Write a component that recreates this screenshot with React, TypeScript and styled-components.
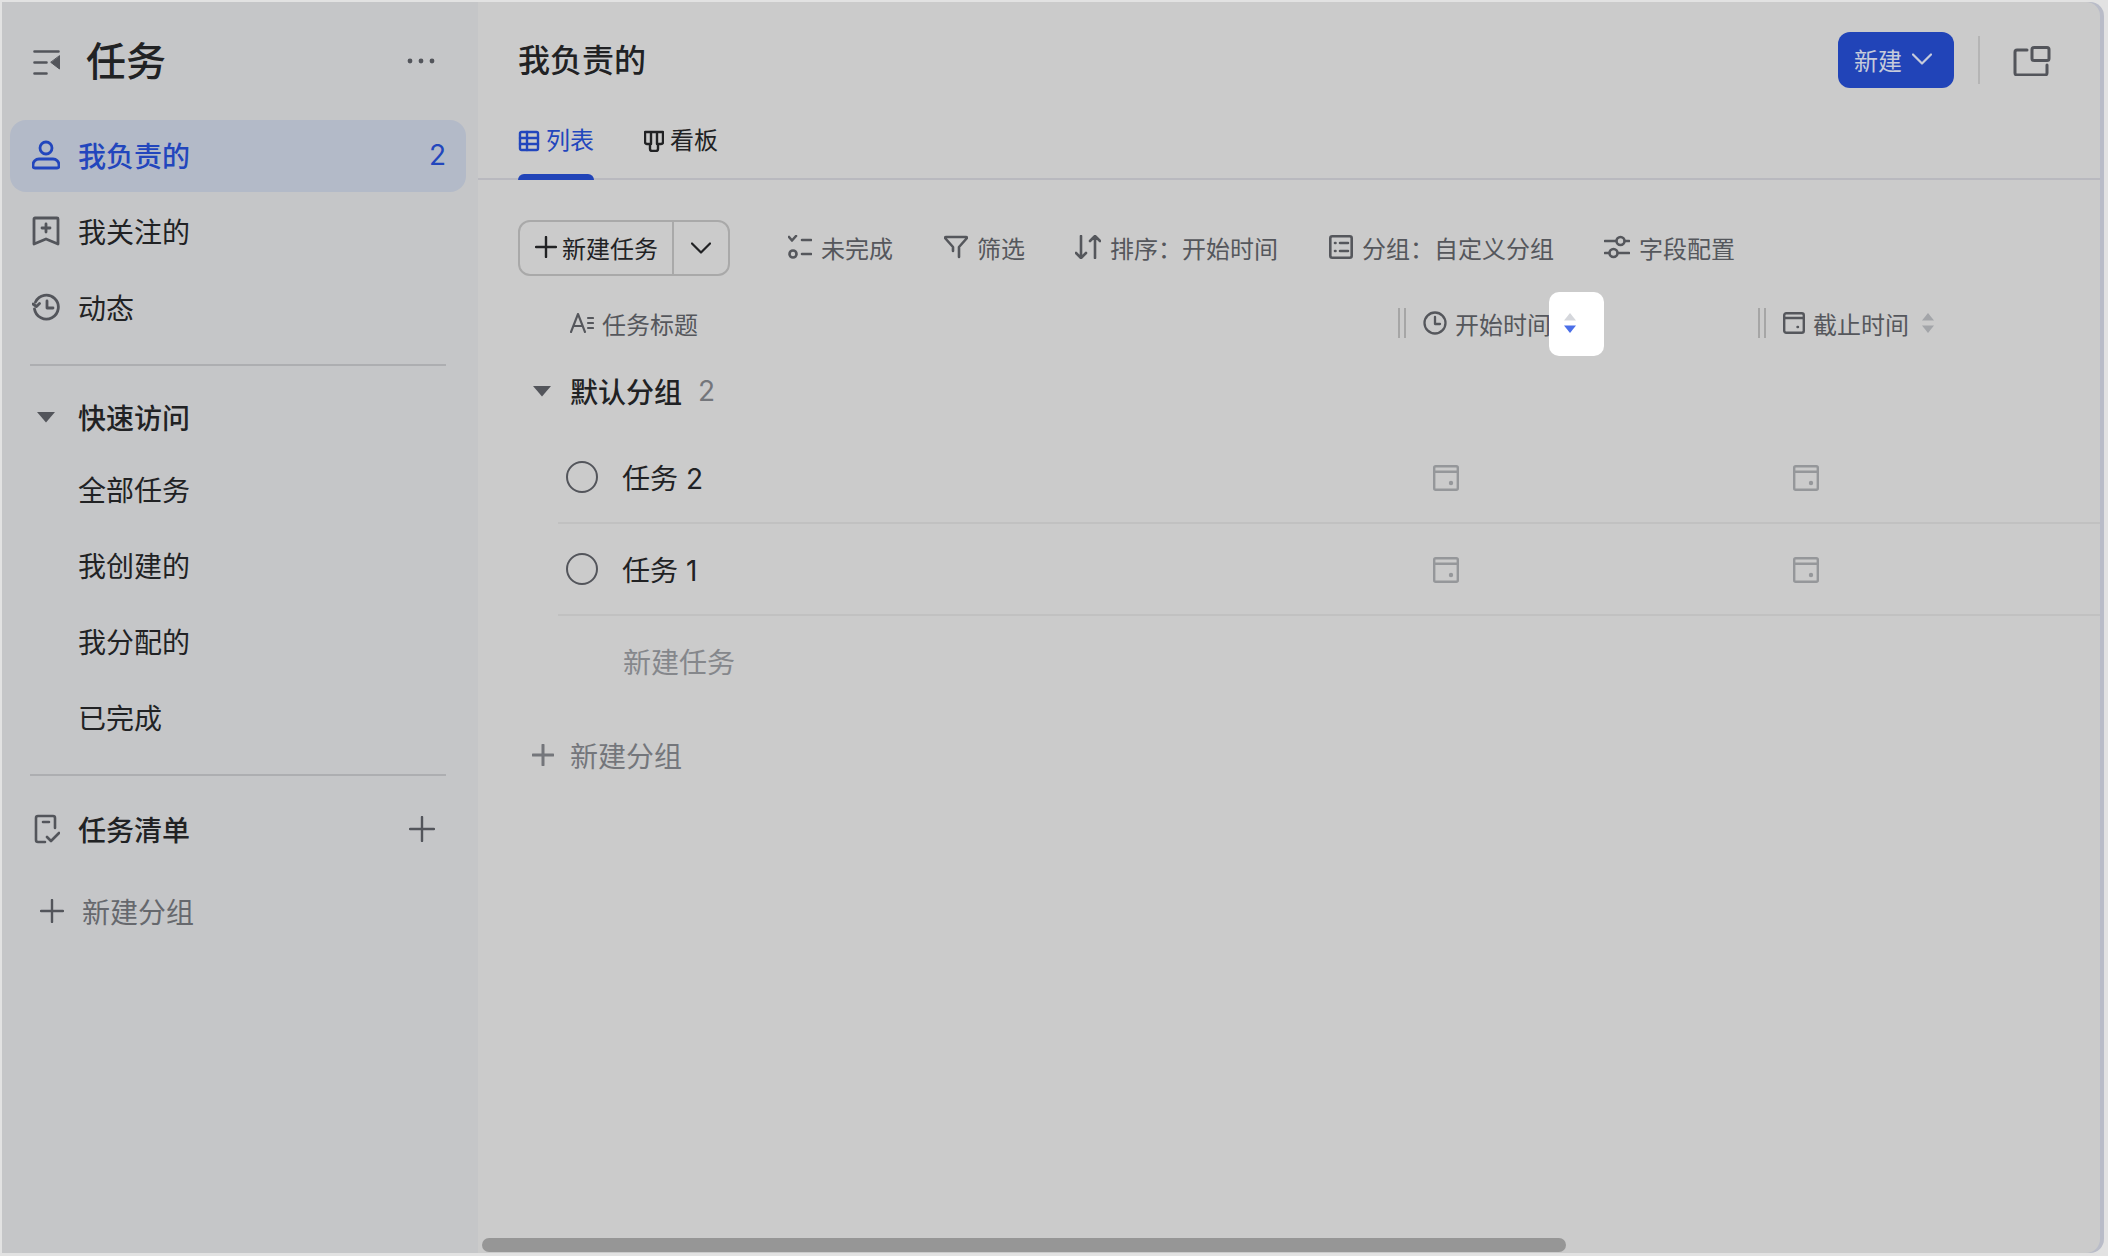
import React from "react";
import styled, { createGlobalStyle } from "styled-components";

const Global = createGlobalStyle`
  html, body { margin: 0; padding: 0; background: #e2e2e2; }
  body { font-family: Inter, "Noto Sans CJK SC", "Noto Sans", sans-serif; color: #212224; }
  * { box-sizing: border-box; }
`;

const Frame = styled.div`
  width: 2108px; height: 1256px; padding: 2px 8px 3px 2px; display: flex; overflow: hidden; background: #e2e2e2;
`;
const Sidebar = styled.aside`
  width: 476px; flex: none; background: #c5c6c8; padding: 0 12px 0 8px; display: flex; flex-direction: column;
`;
const SideHead = styled.div`
  height: 118px; flex: none; display: flex; align-items: center; padding: 2px 31px 0 23px;
`;
const SideTitle = styled.h1`
  margin: 0 0 0 26px; flex: 1; font-size: 40px; line-height: 56px; font-weight: 500; color: #212224;
`;
const MoreIcon = styled.svg`
  margin-top: -2px;
`;
const NavItem = styled.div<{ $active?: boolean }>`
  height: 72px; margin-bottom: 4px; padding: 0 20px 2px 22px; border-radius: 16px; display: flex; align-items: center; gap: 18px;
  font-size: 28px; color: ${(p) => (p.$active ? "#2246bd" : "#212224")};
  background: ${(p) => (p.$active ? "#b3bac8" : "transparent")};
  font-weight: ${(p) => (p.$active ? 500 : 400)};
  svg { flex: none; color: ${(p) => (p.$active ? "#2246bd" : "#53555b")}; }
`;
const NavCount = styled.span`
  margin-left: auto; font-size: 28px; font-weight: 400;
`;
const SideRule = styled.div<{ $gap: number }>`
  height: 2px; flex: none; margin: ${(p) => p.$gap}px 20px 0; background: #adaeb1;
`;
const SectionRow = styled.div<{ $gap: number }>`
  height: 72px; margin-top: ${(p) => p.$gap}px; display: flex; align-items: center; gap: 18px; padding: 0 31px 2px 22px; font-size: 28px; font-weight: 500;
  color: #212224; flex: none;
  svg { flex: none; color: #53555b; }
`;
const CaretBox = styled.span`
  width: 28px; display: flex; justify-content: center;
`;
const SectionText = styled.span`
  flex: 1;
`;
const SubItem = styled.div`
  height: 72px; margin-bottom: 4px; padding: 0 0 2px 68px; display: flex; align-items: center; font-size: 28px; color: #212224; flex: none;
`;
const SideAdd = styled.div`
  height: 72px; margin-top: 9px; display: flex; align-items: center; gap: 18px; padding-left: 30px; font-size: 28px; color: #66686d; flex: none;
  svg { color: #53555b; }
`;

const Main = styled.main`
  flex: 1; min-width: 0; position: relative; background: #cbcbcb; border-radius: 0 14px 14px 0; display: flex; flex-direction: column;
  box-shadow: 4px 0 0 #b9bcc8;
`;
const TopBar = styled.div`
  height: 116px; flex: none; display: flex; align-items: center; padding: 2px 49px 0 40px;
`;
const PageTitle = styled.h2`
  margin: 0; flex: 1; font-size: 32px; line-height: 44px; font-weight: 500; color: #212224;
`;
const NewButton = styled.button`
  width: 116px; height: 56px; margin-top: -2px; border: 0; border-radius: 12px; background: #2144b8; color: #c6cbdb; display: flex; align-items: center;
  gap: 10px; font: inherit; font-size: 24px; padding: 0 0 2px 16px;
`;
const TopRule = styled.div`
  width: 2px; height: 48px; margin: -2px 33px 0 24px; background: #b5b5b5;
`;
const Tabs = styled.div`
  height: 62px; flex: none; display: flex; align-items: flex-start; gap: 50px; padding: 0 40px; border-bottom: 2px solid #b9b9bf;
`;
const Tab = styled.div<{ $active?: boolean }>`
  position: relative; height: 60px; padding-top: 5px; display: flex; align-items: flex-start; gap: 6px; font-size: 24px; line-height: 36px;
  color: ${(p) => (p.$active ? "#2246bd" : "#212224")};
  svg { margin-top: 7px; flex: none; }
  ${(p) => p.$active && `&::after { content: ""; position: absolute; left: 0; right: 0; bottom: -2px; height: 6px; border-radius: 6px 6px 0 0; background: #2144b8; }`}
`;
const Toolbar = styled.div`
  flex: none; height: 56px; margin-top: 40px; padding-left: 40px; display: flex; align-items: center; gap: 51px;
`;
const SplitButton = styled.div`
  width: 212px; height: 56px; margin-right: 7px; flex: none; border: 2px solid #a9a9a9; border-radius: 12px; display: flex; align-items: stretch;
  font-size: 24px; color: #212224;
`;
const SplitMain = styled.div`
  width: 154px; padding: 0 0 2px 15px; border-right: 2px solid #a9a9a9; display: flex; align-items: center; gap: 5px;
`;
const SplitArrow = styled.div`
  flex: 1; display: flex; align-items: center; justify-content: center;
`;
const ToolItem = styled.div<{ $shift?: number }>`
  display: flex; align-items: center; gap: 9px; margin-left: ${(p) => p.$shift ?? 0}px; margin-top: -2px; font-size: 24px; color: #55575c; white-space: nowrap;
  svg { flex: none; }
`;
const Cols = styled.div`
  display: grid; grid-template-columns: 1fr 360px 342px; align-items: center;
`;
const HeadRow = styled(Cols)`
  height: 64px; flex: none; margin-top: 16px; padding: 0 0 2px 92px; font-size: 24px; color: #55575c;
`;
const HeadTitle = styled.div`
  display: flex; align-items: center; gap: 8px;
`;
const HeadCell = styled.div`
  display: flex; align-items: center; gap: 8px;
`;
const Grip = styled.span`
  width: 8px; height: 30px; margin-right: 9px; flex: none; border-left: 2px solid #a6a6a6; border-right: 2px solid #a6a6a6;
`;
const SortWrap = styled.span`
  position: relative; width: 14px; height: 24px; margin-left: 4px; display: inline-flex;
  svg { position: relative; }
`;
const Spotlight = styled.span`
  position: absolute; left: -14px; top: -19px; width: 55px; height: 64px; border-radius: 10px; background: #fff;
`;
const GroupRow = styled.div`
  height: 72px; flex: none; padding: 0 0 2px 54px; display: flex; align-items: center; font-size: 28px; font-weight: 500; color: #212224;
`;
const GroupLabel = styled.span`
  margin-left: 18px;
`;
const GroupCount = styled.span`
  margin-left: 16px; font-weight: 400; color: #74767b;
`;
const TaskList = styled.div`
  flex: none; padding-top: 4px;
`;
const TaskRow = styled(Cols)`
  height: 92px; margin-left: 80px; padding-left: 8px; border-bottom: 2px solid #c1c1c1; font-size: 28px; color: #212224;
`;
const TaskName = styled.div`
  display: flex; align-items: center; gap: 24px;
`;
const Circle = styled.span`
  width: 32px; height: 32px; flex: none; border-radius: 50%; border: 2px solid #53555b;
`;
const DateCell = styled.div`
  padding: 2px 0 0 35px; display: flex; align-items: center; color: #95979a;
`;
const AddTask = styled.div`
  height: 92px; flex: none; padding: 0 0 2px 145px; display: flex; align-items: center; font-size: 28px; color: #85878b;
`;
const AddGroup = styled.div`
  height: 48px; flex: none; margin-top: 23px; padding-left: 54px; display: flex; align-items: center; gap: 16px; font-size: 28px; color: #74767b;
`;
const Scrollbar = styled.div`
  position: absolute; left: 4px; bottom: 1px; width: 1084px; height: 14px; border-radius: 7px; background: #969696;
`;

const S = { fill: "none", stroke: "currentColor", strokeLinecap: "round" as const, strokeLinejoin: "round" as const };

const Caret = () => (
  <svg width="20" height="12" viewBox="0 0 20 12"><path d="M1 1h18l-9 10.500z" fill="#53555b" /></svg>
);
const Plus = ({ size = 26, w = 2.4 }: { size?: number; w?: number }) => (
  <svg width={size} height={size} viewBox={`0 0 ${size} ${size}`} {...S} strokeWidth={w}><path d={`M${size / 2} 1v${size - 2}M1 ${size / 2}h${size - 2}`} /></svg>
);
const Chevron = ({ w = 20, c = "currentColor" }: { w?: number; c?: string }) => (
  <svg width={w} height={w * 0.6} viewBox="0 0 20 12" fill="none" stroke={c} strokeWidth="2.200" strokeLinecap="round" strokeLinejoin="round"><path d="M1 1.500l9 9 9-9" /></svg>
);
const CalIcon = () => (
  <svg width="26" height="26" viewBox="0 0 26 26" {...S} strokeWidth="2.400"><rect x="1.200" y="1.200" width="23.600" height="23.600" rx="1.500" /><path d="M1.200 6.800h23.600" /><circle cx="18" cy="18" r="2.200" fill="currentColor" stroke="none" /></svg>
);
const Sort = ({ active }: { active?: boolean }) => (
  <svg width="14" height="24" viewBox="0 0 14 24"><path d="M7 2l6 7.500H1z" fill={active ? "#d5d7dc" : "#a3a5a9"} /><path d="M7 22l6-7.500H1z" fill={active ? "#4a6fe8" : "#a3a5a9"} /></svg>
);

export default function App() {
  return (
    <>
      <Global />
      <Frame>
        <Sidebar>
          <SideHead>
            <svg width="27" height="25" viewBox="0 0 27 25" color="#53555b" {...S} strokeWidth="2.600">
              <path d="M1.500 1.500h24M1.500 12.500h12M1.500 23.500h12" />
              <path d="M26.500 6v13L18 12.500z" fill="currentColor" stroke="currentColor" strokeWidth="1" />
            </svg>
            <SideTitle>任务</SideTitle>
            <MoreIcon width="28" height="6" viewBox="0 0 28 6" fill="#53555b"><circle cx="3" cy="3" r="2.400" /><circle cx="14" cy="3" r="2.400" /><circle cx="25" cy="3" r="2.400" /></MoreIcon>
          </SideHead>
          <NavItem $active>
            <svg width="28" height="30" viewBox="0 0 28 30" {...S} strokeWidth="2.800"><circle cx="14" cy="8" r="6" /><path d="M3 28h22a2 2 0 0 0 2-2v-1a6 6 0 0 0-6-6H7a6 6 0 0 0-6 6v1a2 2 0 0 0 2 2z" /></svg>
            我负责的
            <NavCount>2</NavCount>
          </NavItem>
          <NavItem>
            <svg width="28" height="30" viewBox="0 0 28 30" {...S} strokeWidth="2.800"><path d="M3 2h22a1 1 0 0 1 1 1v25l-12-5-12 5V3a1 1 0 0 1 1-1zM14 8v8M10 12h8" /></svg>
            我关注的
          </NavItem>
          <NavItem>
            <svg width="28" height="28" viewBox="0 0 28 28" {...S} strokeWidth="2.800"><path d="M3.500 9A12 12 0 1 1 2.500 16M1 11l3.500 2.500 3-3M15 8v7h6" /></svg>
            动态
          </NavItem>
          <SideRule $gap={16} />
          <SectionRow $gap={16}>
            <CaretBox><Caret /></CaretBox>
            <SectionText>快速访问</SectionText>
          </SectionRow>
          <SubItem>全部任务</SubItem>
          <SubItem>我创建的</SubItem>
          <SubItem>我分配的</SubItem>
          <SubItem>已完成</SubItem>
          <SideRule $gap={16} />
          <SectionRow $gap={18}>
            <svg width="28" height="30" viewBox="0 0 28 30" {...S} strokeWidth="2.600"><path d="M23 14V4a2 2 0 0 0-2-2H6a2 2 0 0 0-2 2v22a2 2 0 0 0 2 2h7M11 8h6M15 23l4 4 8-8" /></svg>
            <SectionText>任务清单</SectionText>
            <Plus />
          </SectionRow>
          <SideAdd>
            <Plus size={24} />
            新建分组
          </SideAdd>
        </Sidebar>
        <Main>
          <TopBar>
            <PageTitle>我负责的</PageTitle>
            <NewButton>新建<Chevron c="#c6cbdb" /></NewButton>
            <TopRule />
            <svg width="38" height="30" viewBox="0 0 38 30" color="#53555b" {...S} strokeWidth="3"><path d="M14 4H4a2 2 0 0 0-2 2v21a2 2 0 0 0 2 2h28a2 2 0 0 0 2-2V19" /><rect x="19" y="1.500" width="17" height="13" rx="2" /></svg>
          </TopBar>
          <Tabs>
            <Tab $active>
              <svg width="22" height="22" viewBox="0 0 22 22" {...S} strokeWidth="2.400"><rect x="2" y="2" width="18" height="18" rx="1.500" /><path d="M2 8h18M2 14h18M9 2v18" /></svg>
              列表
            </Tab>
            <Tab>
              <svg width="20" height="22" viewBox="0 0 20 22" {...S} strokeWidth="2.400"><path d="M1 2h18v10a2 2 0 0 1-2 2h-3v5a2 2 0 0 1-2 2H8a2 2 0 0 1-2-2v-5H3a2 2 0 0 1-2-2zM7 2v12M13 2v12" /></svg>
              看板
            </Tab>
          </Tabs>
          <Toolbar>
            <SplitButton>
              <SplitMain><Plus size={22} w={2.400} />新建任务</SplitMain>
              <SplitArrow><Chevron /></SplitArrow>
            </SplitButton>
            <ToolItem>
              <svg width="24" height="24" viewBox="0 0 24 24" {...S} strokeWidth="2.600"><path d="M1 2l3 3.500L8 1M14 5h9M14 19h9" /><circle cx="5" cy="19" r="3.500" /></svg>
              未完成
            </ToolItem>
            <ToolItem>
              <svg width="24" height="24" viewBox="0 0 24 24" {...S} strokeWidth="2.600"><path d="M2 2h20a1 1 0 0 1 1 1l-8 9v10M2 2a1 1 0 0 0-1 1l8 9v4" /></svg>
              筛选
            </ToolItem>
            <ToolItem $shift={-1}>
              <svg width="26" height="24" viewBox="0 0 26 24" {...S} strokeWidth="2.600"><path d="M6 1v22M1 18l5 5 5-5M20 23V1M15 6l5-5 5 5" /></svg>
              排序：开始时间
            </ToolItem>
            <ToolItem>
              <svg width="24" height="24" viewBox="0 0 24 24" {...S} strokeWidth="2.600"><rect x="1.300" y="1.300" width="21.400" height="21.400" rx="2" /><path d="M11 8h8M11 16h8M6 8h.5M6 16h.5" /></svg>
              分组：自定义分组
            </ToolItem>
            <ToolItem $shift={-1}>
              <svg width="26" height="24" viewBox="0 0 26 24" {...S} strokeWidth="2.600"><path d="M1 6h11M21 6h4M1 18h4M14 18h11" /><circle cx="16.500" cy="6" r="4" /><circle cx="9.500" cy="18" r="4" /></svg>
              字段配置
            </ToolItem>
          </Toolbar>
          <HeadRow>
            <HeadTitle>
              <svg width="24" height="20" viewBox="0 0 24 20" {...S} strokeWidth="2.100"><path d="M1 19L8 1l7 18M3.500 13h9M18 5h5M18 10h5M18 15h5" /></svg>
              任务标题
            </HeadTitle>
            <HeadCell>
              <Grip />
              <svg width="24" height="24" viewBox="0 0 24 24" {...S} strokeWidth="2.300"><circle cx="12" cy="12" r="10.500" /><path d="M12 6v7h5" /></svg>
              开始时间
              <SortWrap><Spotlight /><Sort active /></SortWrap>
            </HeadCell>
            <HeadCell>
              <Grip />
              <svg width="22" height="22" viewBox="0 0 22 22" {...S} strokeWidth="2.400"><rect x="1.200" y="1.200" width="19.600" height="19.600" rx="2" /><path d="M1.200 6h19.600M14.500 15h.5" /></svg>
              截止时间
              <SortWrap><Sort /></SortWrap>
            </HeadCell>
          </HeadRow>
          <GroupRow>
            <Caret />
            <GroupLabel>默认分组</GroupLabel>
            <GroupCount>2</GroupCount>
          </GroupRow>
          <TaskList>
            <TaskRow>
              <TaskName><Circle />任务 2</TaskName>
              <DateCell><CalIcon /></DateCell>
              <DateCell><CalIcon /></DateCell>
            </TaskRow>
            <TaskRow>
              <TaskName><Circle />任务 1</TaskName>
              <DateCell><CalIcon /></DateCell>
              <DateCell><CalIcon /></DateCell>
            </TaskRow>
          </TaskList>
          <AddTask>新建任务</AddTask>
          <AddGroup><Plus size={22} w={3} />新建分组</AddGroup>
          <Scrollbar />
        </Main>
      </Frame>
    </>
  );
}
